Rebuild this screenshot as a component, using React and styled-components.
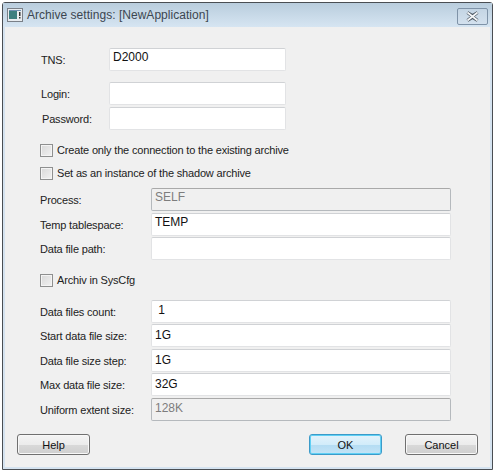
import React from 'react'
import styled, { createGlobalStyle } from 'styled-components'

const Global = createGlobalStyle`
  html, body { margin: 0; padding: 0; background: #fff; }
  body { font-family: "Liberation Sans", Arial, sans-serif; font-size: 11px; letter-spacing: -0.17px; color: #222; }
`

const Page = styled.div`
  width: 495px;
  height: 472px;
  padding: 2px;
  box-sizing: border-box;
  overflow: hidden;
`

const Window = styled.div`
  height: 468px;
  width: 491px;
  box-sizing: border-box;
  border: 1px solid #4a4e53;
  border-radius: 3px 3px 0 0;
  background: #d5e3f0;
  padding: 0 2px 2px 2px;
  display: flex;
  flex-direction: column;
`

const TitleBar = styled.div`
  height: 24px;
  flex: none;
  margin: 0 -2px;
  padding: 0 4px 0 4px;
  display: flex;
  align-items: center;
  gap: 4px;
  background: linear-gradient(#b9cddd, #d6e5f2);
`

const TitleText = styled.span`
  font-size: 12px;
  letter-spacing: 0.03px;
  color: #3c4650;
  flex: 1;
`

const CloseBtn = styled.div`
  width: 31px;
  height: 17px;
  box-sizing: border-box;
  margin-top: 2px;
  border: 1px solid #7f93a8;
  border-radius: 2px;
  display: flex;
  align-items: center;
  justify-content: center;
  background: linear-gradient(#c4d5e4, #d3e1ee);
`

const Client = styled.div`
  flex: 1;
  background: #f0f0f0;
  padding: 21px 0 0 12px;
  box-sizing: border-box;
  display: flex;
  flex-direction: column;
`

const Fields = styled.div`
  padding-left: 23px;
  display: flex;
  flex-direction: column;
`

const Row = styled.div`
  display: flex;
  align-items: center;
  height: 23px;
  margin-top: ${p => p.$gap ?? 2}px;
`

const Label = styled.label`
  width: ${p => p.$w}px;
  flex: none;
  padding: ${p => (p.$high ? 0 : 1)}px 0 0 ${p => p.$in || 0}px;
  box-sizing: border-box;
`

const Input = styled.div`
  height: 23px;
  flex: none;
  box-sizing: border-box;
  width: ${p => p.$w}px;
  padding: ${p => p.$drop || 0}px 3px 0;
  border: 1px solid ${p => (p.$off ? '#b5b9bd' : '#e2e3e5')};
  border-top-color: ${p => (p.$off ? '#a9a9a9' : '#d0d2d5')};
  background: ${p => (p.$off ? '#f0f0f0' : '#fff')};
  color: ${p => (p.$off ? '#7d7d7d' : '#111')};
  border-radius: 2px;
  font-size: 12px;
  line-height: 17px;
  letter-spacing: 0;
  white-space: pre;
`

const CheckRow = styled.div`
  display: flex;
  align-items: center;
  gap: 4px;
  height: 13px;
  margin-top: ${p => p.$gap}px;
`

const CheckText = styled.span`
  padding-bottom: 2px;
`

const Box = styled.span`
  width: 13px;
  height: 13px;
  flex: none;
  box-sizing: border-box;
  border: 1px solid #8e8f8f;
  background: linear-gradient(135deg, #d8d8d8, #f2f2f2);
  box-shadow: inset 0 0 0 1px #f4f4f4;
`

const Buttons = styled.div`
  display: flex;
  align-items: center;
  margin-top: 13px;
`

const Button = styled.div`
  width: ${p => p.$w}px;
  height: 21px;
  flex: none;
  box-sizing: border-box;
  margin-left: ${p => p.$ml || 0}px;
  display: flex;
  align-items: center;
  justify-content: center;
  border-radius: 3px;
  letter-spacing: 0;
  color: #111;
  border: 1px solid ${p => (p.$primary ? '#3c9bc9' : '#707070')};
  background: ${p => p.$primary
    ? 'linear-gradient(#e4f3fb 0%, #d2ecfa 50%, #b4dcf3 52%, #c4e4f6 100%)'
    : 'linear-gradient(#f4f4f4 0%, #ececec 50%, #d9d9d9 52%, #cfcfcf 100%)'};
  box-shadow: inset 0 0 0 1px ${p => (p.$primary ? '#5fd0f5' : '#f8f8f8')};
`

const WindowIcon = () => (
  <svg width="16" height="14" viewBox="0 0 16 14">
    <rect x="0.5" y="0.5" width="15" height="13" fill="#e8ecf0" stroke="#7a8088" />
    <rect x="2" y="3" width="8" height="8" fill="#3d7f80" />
    <rect x="2" y="2" width="12" height="1" fill="#6f8fb0" />
    <rect x="12" y="4" width="1.5" height="4" fill="#333" />
    <rect x="12" y="9" width="1.5" height="1.5" fill="#333" />
  </svg>
)

const CloseIcon = () => (
  <svg width="15" height="11" viewBox="0 0 15 11">
    <path d="M2.5 1.5 L7.5 4.5 L12.5 1.5 M2.5 9.5 L7.5 6.5 L12.5 9.5 M2.5 1.5 L12.5 9.5 M12.5 1.5 L2.5 9.5" fill="none" stroke="#4a5560" strokeWidth="3" />
    <path d="M2.5 1.5 L12.5 9.5 M12.5 1.5 L2.5 9.5" fill="none" stroke="#f4f6f8" strokeWidth="1.8" />
  </svg>
)

const Check = ({ gap, children }) => (
  <CheckRow $gap={gap}>
    <Box />
    <CheckText>{children}</CheckText>
  </CheckRow>
)

const Field = ({ label, value, off, gap, high, drop }) => (
  <Row $gap={gap}>
    <Label $w={111} $high={high}>{label}</Label>
    <Input $w={300} $off={off} $drop={drop}>{value}</Input>
  </Row>
)

const Login = ({ label, value, gap, indent, high }) => (
  <Row $gap={gap}>
    <Label $w={69} $in={indent} $high={high}>{label}</Label>
    <Input $w={177}>{value}</Input>
  </Row>
)

export default function App() {
  return (
    <Page>
      <Global />
      <Window>
        <TitleBar>
          <WindowIcon />
          <TitleText>Archive settings: [NewApplication]</TitleText>
          <CloseBtn><CloseIcon /></CloseBtn>
        </TitleBar>
        <Client>
          <Fields>
            <Login label="TNS:" value="D2000" gap={0} indent={1} high />
            <Login label="Login:" gap={11} indent={1} />
            <Login label="Password:" gap={2} indent={2} high />
            <Check gap={14}>Create only the connection to the existing archive</Check>
            <Check gap={10}>Set as an instance of the shadow archive</Check>
            <Field label="Process:" value="SELF" off gap={8} />
            <Field label="Temp tablespace:" value="TEMP" high />
            <Field label="Data file path:" gap={1} />
            <Check gap={14}>Archiv in SysCfg</Check>
            <Field label="Data files count:" value=" 1" gap={13} drop={1} />
            <Field label="Start data file size:" value="1G" gap={1} drop={2} />
            <Field label="Data file size step:" value="1G" drop={2} />
            <Field label="Max data file size:" value="32G" gap={1} drop={2} />
            <Field label="Uniform extent size:" value="128K" off drop={1} />
          </Fields>
          <Buttons>
            <Button $w={73}>Help</Button>
            <Button $w={73} $ml={219} $primary>OK</Button>
            <Button $w={73} $ml={23}>Cancel</Button>
          </Buttons>
        </Client>
      </Window>
    </Page>
  )
}
